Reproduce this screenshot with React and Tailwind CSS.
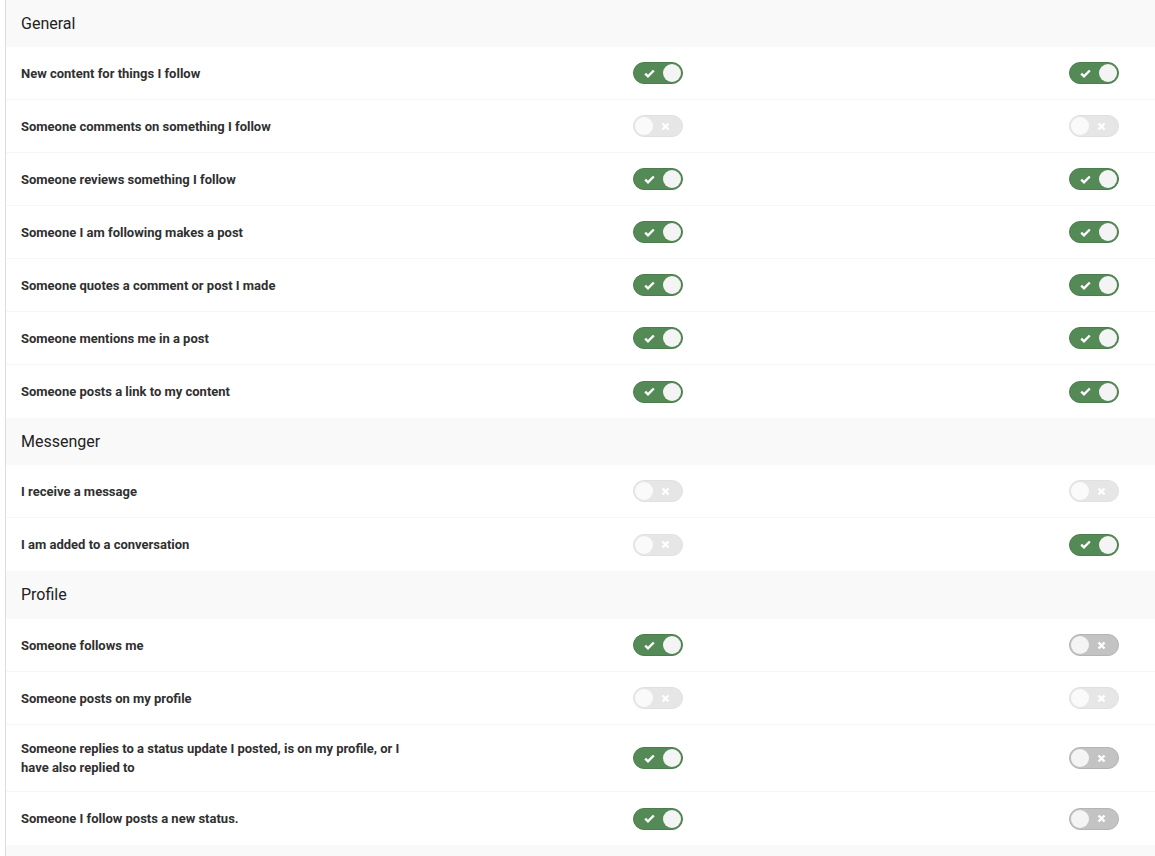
import React from 'react';

const sections = [
  {
    title: 'General',
    rows: [
      { label: 'New content for things I follow', a: 'on', b: 'on' },
      { label: 'Someone comments on something I follow', a: 'disabled', b: 'disabled' },
      { label: 'Someone reviews something I follow', a: 'on', b: 'on' },
      { label: 'Someone I am following makes a post', a: 'on', b: 'on' },
      { label: 'Someone quotes a comment or post I made', a: 'on', b: 'on' },
      { label: 'Someone mentions me in a post', a: 'on', b: 'on' },
      { label: 'Someone posts a link to my content', a: 'on', b: 'on' },
    ],
  },
  {
    title: 'Messenger',
    rows: [
      { label: 'I receive a message', a: 'disabled', b: 'disabled' },
      { label: 'I am added to a conversation', a: 'disabled', b: 'on' },
    ],
  },
  {
    title: 'Profile',
    rows: [
      { label: 'Someone follows me', a: 'on', b: 'off' },
      { label: 'Someone posts on my profile', a: 'disabled', b: 'disabled' },
      {
        label: 'Someone replies to a status update I posted, is on my profile, or I have also replied to',
        a: 'on',
        b: 'off',
        tall: true,
      },
      { label: 'Someone I follow posts a new status.', a: 'on', b: 'off' },
    ],
  },
];

const Toggle = ({ state }) => {
  if (state === 'on') {
    return (
      <div className="w-[50px] h-[22px] rounded-full bg-[#548a56] border border-[#4b7d4d] flex items-center justify-between pl-[10px] pr-[1px]">
        <svg width="11" height="9" viewBox="0 0 11 9">
          <path d="M1.2 4.6 L4 7.3 L9.8 1.5" fill="none" stroke="#fff" strokeWidth="2.4" />
        </svg>
        <div className="w-[18px] h-[18px] rounded-full bg-[#f4f4f4]" />
      </div>
    );
  }
  return (
    <div
      className={`w-[50px] h-[22px] rounded-full bg-[#c3c3c3] border border-[#b4b4b4] flex items-center justify-between pl-[1px] pr-[12px] ${
        state === 'disabled' ? 'opacity-40' : ''
      }`}
    >
      <div className="w-[18px] h-[18px] rounded-full bg-[#f4f4f4]" />
      <svg width="9" height="9" viewBox="0 0 9 9">
        <path d="M1.5 1.5 L7.5 7.5 M7.5 1.5 L1.5 7.5" stroke="#fff" strokeWidth="2.4" />
      </svg>
    </div>
  );
};

const App = () => {
  return (
    <div className="bg-white min-h-screen pl-[5px] font-['Roboto','Liberation_Sans',sans-serif]">
      <div className="border-l border-[#dcdcdc]">
        {sections.map((section) => (
          <div key={section.title}>
            <div
              className={`${
                section.title === 'Profile' ? 'h-[48px]' : 'h-[47px]'
              } bg-[#f9f9f9] flex items-center px-[15px] text-[16px] text-[#222]`}
            >
              {section.title}
            </div>
            {section.rows.map((row, i) => (
              <div
                key={row.label}
                className={`grid grid-cols-[627px_436px_1fr] items-center ${
                  row.tall ? 'h-[67px]' : 'h-[53px]'
                } ${i < section.rows.length - 1 ? 'border-b border-[#f6f6f6]' : ''}`}
              >
                <div className="pl-[15px] pr-[4px] text-[13px] font-bold text-[#303030] leading-[19px]">
                  <div className="max-w-[395px]">{row.label}</div>
                </div>
                <div>
                  <Toggle state={row.a} />
                </div>
                <div>
                  <Toggle state={row.b} />
                </div>
              </div>
            ))}
          </div>
        ))}
        <div className="h-[47px] bg-[#f9f9f9]" />
      </div>
    </div>
  );
};

export default App;
